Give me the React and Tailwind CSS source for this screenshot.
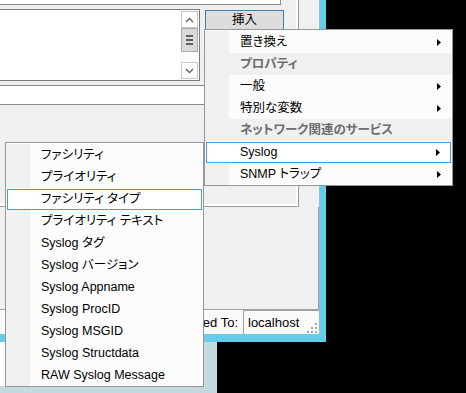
import React from 'react';

const font = "font-['Liberation_Sans','Noto_Sans_CJK_JP',sans-serif]";

function Arrow() {
  return (
    <svg width="4" height="7" viewBox="0 0 4 7" className="ml-auto">
      <path d="M0 0L4 3.5L0 7Z" fill="#000" />
    </svg>
  );
}

function MenuRow({ label, sub, active, header }) {
  if (header) {
    return (
      <div className="flex h-[22px] items-center bg-[#f0f0f0] pl-[35px] font-bold text-[#6d6d6d]">
        {label}
      </div>
    );
  }
  if (active) {
    return (
      <div className="flex h-[22px] items-center px-[1px]">
        <div className="flex h-[21px] flex-1 items-center border border-[#4c9de6] bg-white pl-[33px] pr-[10px]">
          {label}
          {sub && <Arrow />}
        </div>
      </div>
    );
  }
  return (
    <div className="flex h-[22px]">
      <div className="w-[24px] bg-[#f1f1f1]" />
      <div className="flex flex-1 items-center bg-[#fcfcfc] pl-[11px] pr-[11px]">
        {label}
        {sub && <Arrow />}
      </div>
    </div>
  );
}

const mainMenu = [
  { label: '置き換え', sub: true },
  { label: 'プロパティ', header: true },
  { label: '一般', sub: true },
  { label: '特別な変数', sub: true },
  { label: 'ネットワーク関連のサービス', header: true },
  { label: 'Syslog', sub: true, active: true },
  { label: 'SNMP トラップ', sub: true },
];

const syslogMenu = [
  'ファシリティ',
  'プライオリティ',
  'ファシリティ タイプ',
  'プライオリティ テキスト',
  'Syslog タグ',
  'Syslog バージョン',
  'Syslog Appname',
  'Syslog ProcID',
  'Syslog MSGID',
  'Syslog Structdata',
  'RAW Syslog Message',
];

function Scrollbar() {
  return (
    <div className="flex w-[17px] flex-col py-[1px]">
      <div className="flex h-[17px] items-center justify-center border border-[#c8c8c8] bg-white">
        <svg width="9" height="6" viewBox="0 0 9 6">
          <path d="M1 5L4.5 1.5L8 5" stroke="#606060" strokeWidth="1.3" fill="none" />
        </svg>
      </div>
      <div className="flex h-[24px] flex-col items-center justify-center gap-[2px] border border-[#a8a8a8] bg-[#dadada]">
        <div className="h-[2px] w-[7px] bg-[#606060]" />
        <div className="h-[2px] w-[7px] bg-[#606060]" />
        <div className="h-[2px] w-[7px] bg-[#606060]" />
      </div>
      <div className="flex-1 bg-white" />
      <div className="flex h-[17px] items-center justify-center border border-[#c8c8c8] bg-white">
        <svg width="9" height="6" viewBox="0 0 9 6">
          <path d="M1 1L4.5 4.5L8 1" stroke="#606060" strokeWidth="1.3" fill="none" />
        </svg>
      </div>
    </div>
  );
}

export default function App() {
  return (
    <div className={`relative h-[393px] w-[466px] overflow-hidden bg-black text-[12.5px] leading-none text-black ${font} [font-feature-settings:'palt']`}>
      <div className="flex h-[342px]">
        {/* window */}
        <div className="flex h-full w-[326px] flex-col border-b-[8px] border-r-[7px] border-[#63cdea] bg-[#f0f0f0]">
          <div className="flex h-[207px]">
            <div className="flex w-[299px] border-b border-r border-[#9a9a9a]">
              <div className="flex flex-1 flex-col border-b-2 border-r-2 border-white">
                <div className="h-[5px] w-[281px] border-b border-r border-[#8a8a8a] bg-white" />
                <div className="mt-[4px] flex">
                  <div className="flex h-[72px] w-[200px] border-b border-r border-t border-[#7a7a7a] bg-white pr-[1px]">
                    <div className="flex-1" />
                    <Scrollbar />
                  </div>
                  <div className="ml-[5px] mt-[1px] flex h-[20px] w-[79px] items-center justify-center border border-[#3c7fb1] bg-[#dddddd]">
                    挿入
                  </div>
                </div>
                <div className="mt-[4px] h-[20px] w-[284px] border-b border-t border-[#8a8a8a] bg-white" />
                <div className="flex-1" />
              </div>
            </div>
            <div className="flex-1 border-r border-white" />
          </div>
          <div className="h-[103px] border-b border-r border-[#a0a0a0] bg-[#f0f0f0]" />
          <div className="flex flex-1 items-stretch bg-[#fafafa]">
            <div className="flex w-[243px] items-center justify-end pr-[5px] text-[13px]">Connected To:</div>
            <div className="relative flex flex-1 items-center border-l border-t border-[#a0a0a0] pl-[4px] text-[13px]">
              localhost
              <svg width="12" height="11" viewBox="0 0 12 11" className="absolute bottom-[1px] right-[1px]">
                <rect x="9" y="1" width="2" height="2" fill="#a8a8a8" />
                <rect x="5" y="5" width="2" height="2" fill="#a8a8a8" />
                <rect x="9" y="5" width="2" height="2" fill="#a8a8a8" />
                <rect x="1" y="9" width="2" height="2" fill="#a8a8a8" />
                <rect x="5" y="9" width="2" height="2" fill="#a8a8a8" />
                <rect x="9" y="9" width="2" height="2" fill="#a8a8a8" />
              </svg>
            </div>
          </div>
        </div>
        <div className="flex-1" />
      </div>
      <div className="flex h-[51px]">
        <div className="flex w-[217px] bg-[#c6d9df]">
          <div className="h-[44px] w-[5px] bg-white" />
        </div>
        <div className="flex-1" />
      </div>

      {/* context menu */}
      <div className="absolute left-[204px] top-[29px] w-[249px] border border-[#979797] bg-[#fcfcfc] pt-[1px]">
        {mainMenu.map((m) => (
          <MenuRow key={m.label} {...m} />
        ))}
      </div>

      {/* syslog submenu */}
      <div className="absolute left-[5px] top-[142px] w-[199px] border border-[#979797] bg-[#fcfcfc] pt-[1px]">
        {syslogMenu.map((label, i) => (
          <MenuRow key={label} label={label} active={i === 2} />
        ))}
      </div>
    </div>
  );
}
